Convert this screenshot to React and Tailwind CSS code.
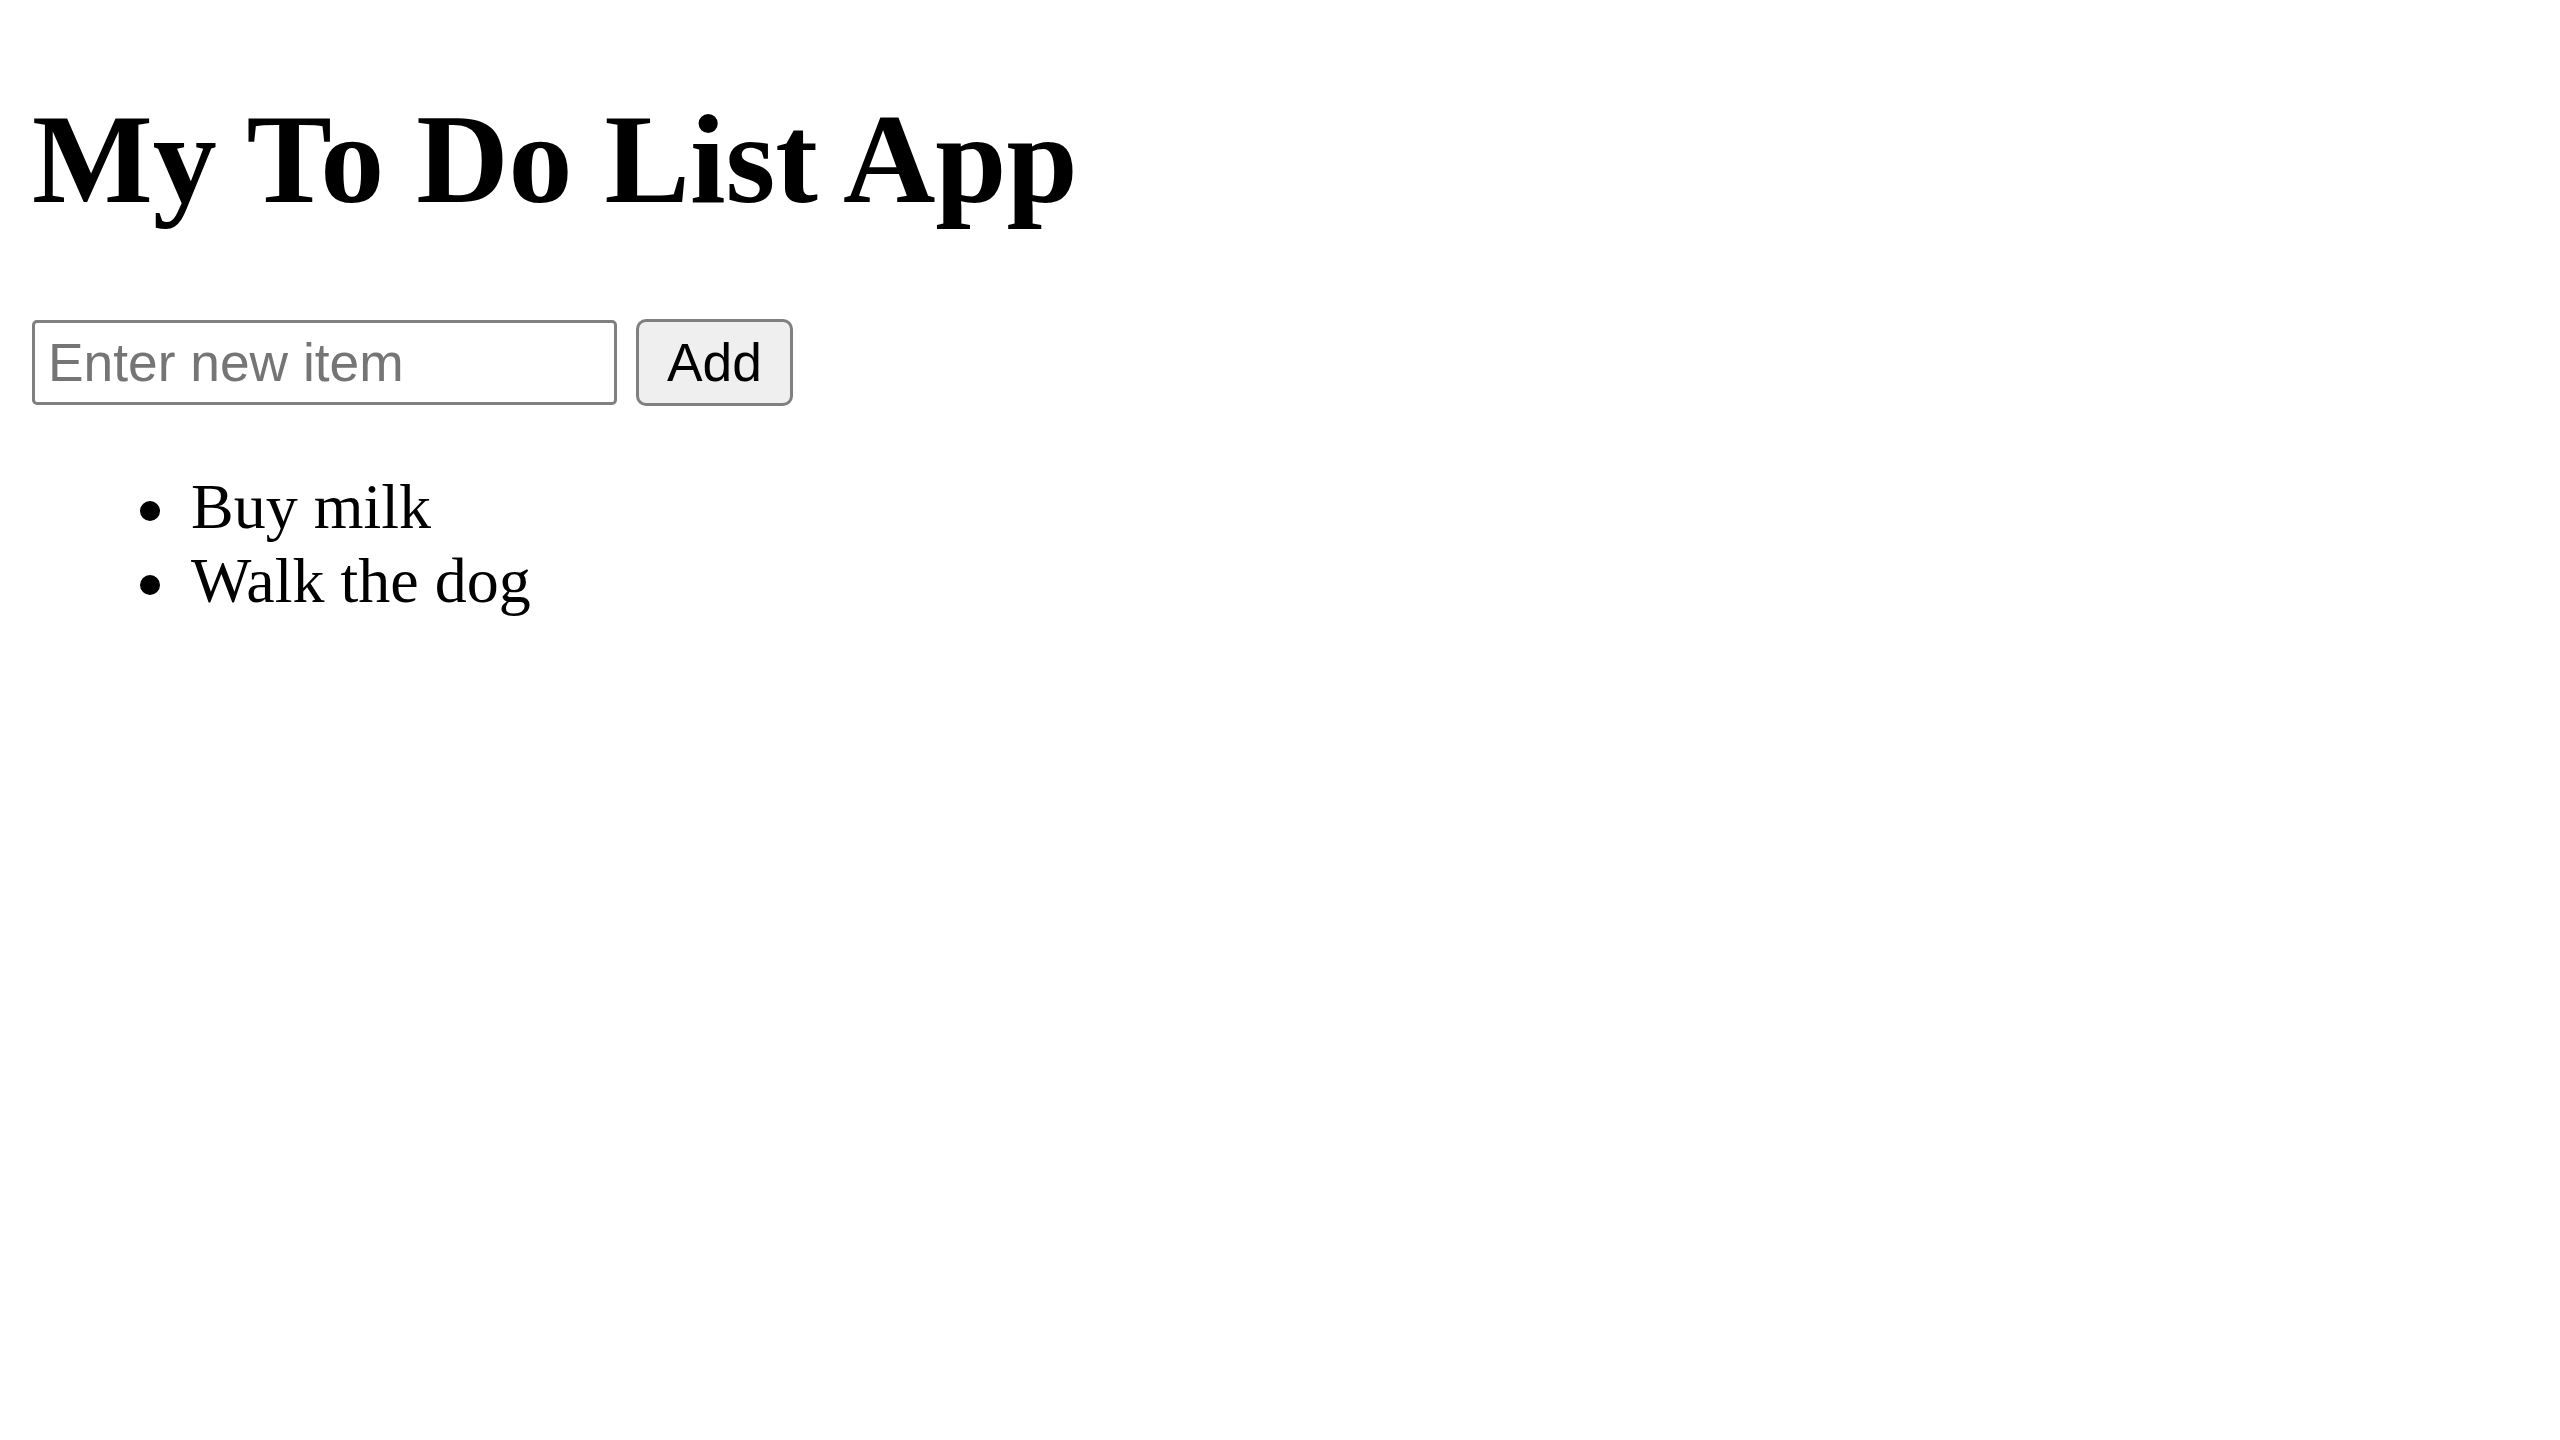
export default function App() {
  const items = ["Buy milk", "Walk the dog"];
  return (
    <div className="mx-[32px] mb-[32px] text-black bg-white" style={{ fontFamily: '"Liberation Serif", "Times New Roman", serif' }}>
      <h1 className="text-[128px] font-bold leading-[normal] my-[85.76px]">My To Do List App</h1>
      <div className="flex items-center gap-[19px] h-[87px]">
        <input
          type="text"
          placeholder="Enter new item"
          className="w-[585px] h-[85px] border-[3px] border-[#808080] rounded-[5px] px-[13px] text-[53.33px] leading-[normal] text-black placeholder:text-[#757575] bg-white outline-none"
          style={{ fontFamily: '"Liberation Sans", Arial, sans-serif' }}
        />
        <button
          className="w-[157px] h-[87px] border-[3px] border-[#808080] rounded-[10px] bg-[#efefef] text-[53.33px] leading-[normal] text-black flex items-center justify-center"
          style={{ fontFamily: '"Liberation Sans", Arial, sans-serif' }}
        >
          Add
        </button>
      </div>
      <ul className="pl-[108px] my-[64px] text-[64px] leading-[normal]">
        {items.map((t) => (
          <li key={t} className="flex items-center">
            <span className="w-[20px] h-[20px] mt-[8px] mr-[31px] rounded-full bg-black shrink-0" />
            <span>{t}</span>
          </li>
        ))}
      </ul>
    </div>
  );
}
